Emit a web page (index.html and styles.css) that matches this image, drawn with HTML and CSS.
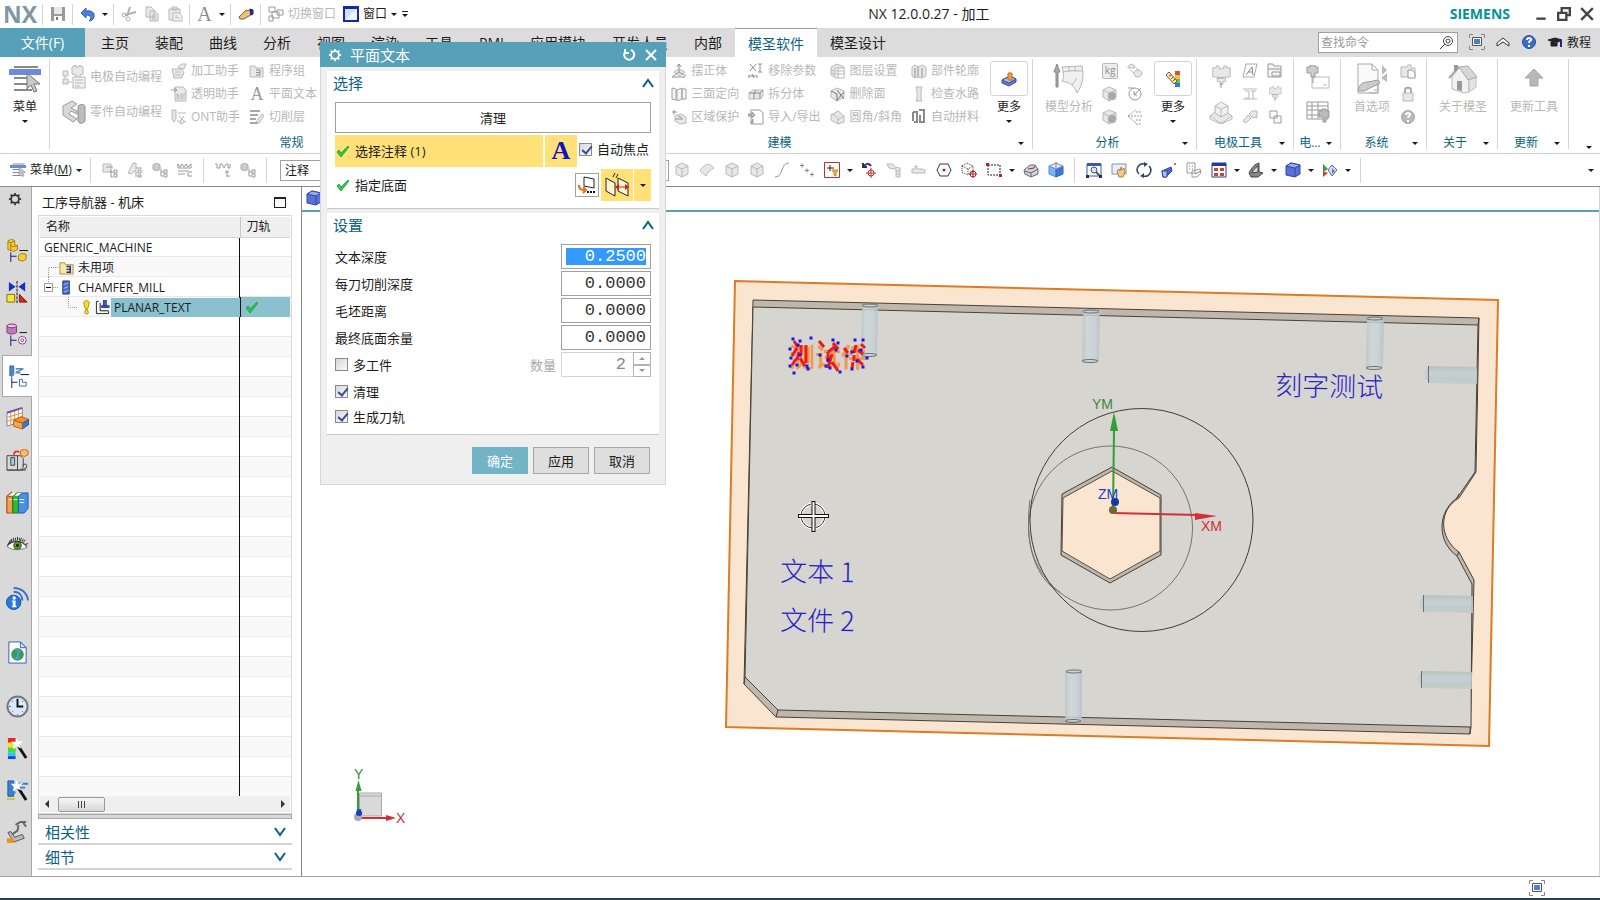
FILE: index.html
```html
<!DOCTYPE html>
<html lang="zh-CN">
<head>
  <meta charset="UTF-8" />
  <meta name="viewport" content="width=device-width, initial-scale=1.0" />
  <title>NX 12.0.0.27 - 加工</title>
  <link rel="stylesheet" href="styles.css">
</head>
<body>
  <!-- icon sprite -->
  <svg class="sprite" aria-hidden="true">
    <symbol id="save" viewBox="0 0 16 16"><path fill="#9a9a9a" stroke="none" d="M1 1h14v14H1z"/><path fill="#e8e8e8" stroke="none" d="M4 1h8v7H4z"/><path fill="#fff" stroke="none" d="M4 10h8v5H4z"/><path fill="#777" stroke="none" d="M6 11h2v3H6z"/></symbol>
    <symbol id="undo" viewBox="0 0 16 16"><path fill="#4b82d8" stroke="#2e5fb4" d="M1 7l5-5v3c6-1 9 2 8 6-1 3-3 4-5 4 3-3 2-6-3-6v3z"/></symbol>
    <symbol id="cut" viewBox="0 0 16 16"><g fill="none" stroke="#b0b0b0"><path stroke-width="2" d="M9 1L6 10M15 6L4 9"/><circle cx="3" cy="9" r="2"/><circle cx="7" cy="13" r="2"/></g></symbol>
    <symbol id="copy" viewBox="0 0 16 16"><path d="M2 1h5l3 3v7H2zM6 5h5l3 3v7H6z"/><path d="M8 9h4M8 11h4M8 13h4"/></symbol>
    <symbol id="paste" viewBox="0 0 16 16"><path d="M2 3h11v11H2zM5 1h5v3H5z"/><path fill="#f6f6f6" d="M6 7h6l3 3v5H6z"/><path d="M8 10h3M8 12h5"/></symbol>
    <symbol id="hand" viewBox="0 0 16 16"><path fill="#e8c27a" stroke="#7a6238" d="M1 11l6-6 5-1 1 5-4 2-3 2H2z"/><path fill="#2a2aa0" stroke="#1a1a80" d="M12 3l3 1v4l-2 1z"/></symbol>
    <symbol id="windows" viewBox="0 0 16 16"><path fill="#fff" stroke="#999" d="M1 1h6v5H1zM9 4h6v5H9zM4 6h7v6H4zM1 10h4v5H1z"/></symbol>
    <symbol id="window" viewBox="0 0 16 16"><path fill="#cfe0f8" stroke="#1428a8" stroke-width="2" d="M1 1h14v14H1z"/><path stroke="none" fill="#fff" d="M2 14L14 2v12z" opacity=".6"/><path fill="#1428a8" stroke="none" d="M0 0h16v3H0z"/></symbol>
    <symbol id="menu" viewBox="0 0 32 28"><path fill="none" stroke="#8a8a8a" stroke-width="2" d="M5 2h24M5 13h18M5 19h14M5 25h18"/><path fill="#6d8bdc" stroke="none" d="M0 4h32v6H0z"/><path fill="#c8c8c8" stroke="#777" d="M18 8v16l4-4 3 7 3-1-3-7h6z"/></symbol>
    <symbol id="machine" viewBox="0 0 24 24"><path d="M10 2h2V0h2v2h3V0h2v2h2v7l-3 1v3h-4v-3l-4-1z"/><path d="M1 6h5v5H1zM1 14h5v5H1zM6 17h4M3 11v3"/><path fill="#f2f2f2" d="M11 12h12v11H11z"/><path d="M13 15h8M13 18h8M13 21h5"/></symbol>
    <symbol id="part" viewBox="0 0 24 24"><path fill="#d8d8d8" stroke="#9a9a9a" d="M1 6l9-5 5 3-6 4 6 3v3l-6-3-2 3 8 5-4 3-10-7z"/><path fill="#bdbdbd" stroke="#8e8e8e" d="M16 6c2-2 6-2 7 0v15c-2 3-6 3-7 0z"/><path d="M17 10l5-2M17 14l5-2M17 18l5-2"/></symbol>
    <symbol id="helper" viewBox="0 0 16 16"><path d="M1 6h9l3 3-2 6H3z"/><path d="M7 5c2-5 5-4 8-4l-2 5z"/><path d="M4 9h5M4 12h6"/></symbol>
    <symbol id="def" viewBox="0 0 16 16"><path d="M4 1h8l3 3v11H4z"/><path d="M6 8v5h1l1-2-1-3zM12 8h-2v5h2M10 10h2M13 13V8h2"/><path stroke="#999" d="M0 4h5M3 2l3 2-3 2"/></symbol>
    <symbol id="ont" viewBox="0 0 16 16"><path d="M1 1h4v9l-2 3-2-3zM7 4h8M8 7l6 6M13 7l-5 7M6 11l4 4 5-3"/></symbol>
    <symbol id="folder" viewBox="0 0 16 16"><path d="M1 3h5l1 2h7v9H1z"/><path fill="none" stroke="#909090" d="M7 7h4v5H7M7 9.500h4"/></symbol>
    <symbol id="cutlevel" viewBox="0 0 16 16"><path fill="none" stroke="#a8a8a8" stroke-width="2" d="M1 2h10M1 6h8M1 10h6M1 14h8"/><path d="M7 13l6-8 2 2-5 7z"/></symbol>
    <symbol id="axisbody" viewBox="0 0 16 16"><path d="M3 9l5-3 6 3-5 4z"/><path fill="none" stroke="#909090" d="M8 9V1M6 4l2-3 2 3M8 9l-7 5M8 9l7 4M1 14h13"/></symbol>
    <symbol id="planes" viewBox="0 0 16 16"><path fill="#f6f6f6" stroke="#a0a0a0" d="M1 2l4 1v11l-4-1zM6 4l5-2v11l-5 2zM11 3h4v10h-4z"/></symbol>
    <symbol id="protect" viewBox="0 0 16 16"><path d="M4 7l6-2 5 3v6l-6 1-5-3z"/><path fill="none" stroke="#999" d="M1 3h5M3 1v5M4 10h8M7 7l4 2"/></symbol>
    <symbol id="param" viewBox="0 0 16 16"><path fill="none" stroke="#8d8d8d" d="M2 1l6 7M8 1L2 8M10 1h4M12 1v8M10 9h4M1 12v3M1 13h7M9 12v3M4 11l2 4"/></symbol>
    <symbol id="split" viewBox="0 0 16 16"><path d="M1 7l4-3h10v6l-3 3H1z"/><path fill="none" stroke="#888" d="M1 7h11v6M12 7l3-3M6 7v6M8 4L6 7"/></symbol>
    <symbol id="import" viewBox="0 0 16 16"><path fill="#fff" stroke="#999" d="M3 1h9l3 3v11H3z"/><path fill="#bbb" stroke="#999" d="M0 5h4V3l3 3-3 3V7H0zM5 10v4H3z"/></symbol>
    <symbol id="layers" viewBox="0 0 16 16"><path d="M1 4l6-3 7 3v8l-7 3-6-3z"/><path fill="#fff" d="M5 5h9v10H5z"/><path d="M6 8h7M6 11h7M8 5v10M1 7l4 1M1 10l4 1"/></symbol>
    <symbol id="delface" viewBox="0 0 16 16"><path d="M1 5l6-3 7 3v6l-7 4-6-4z"/><path fill="none" stroke="#777" d="M1 5l6 3v7M7 4l7 9M14 6l-7 8"/></symbol>
    <symbol id="fillet" viewBox="0 0 16 16"><path d="M1 6c3-1 6 1 7 5v4l-7-4zM1 6l7-4 6 5v6l-6 2M8 11l6-4"/></symbol>
    <symbol id="profile" viewBox="0 0 16 16"><path d="M1 4l3-2 3 2 4-2 4 2v9l-4 2-4-1-3 1-3-2z"/><path stroke="#909090" d="M4 5v9M7 4v10M11 5v9"/></symbol>
    <symbol id="water" viewBox="0 0 16 16"><path d="M5 1h6l-1 3v8l1 3H5l1-3V4z"/></symbol>
    <symbol id="splice" viewBox="0 0 16 16"><path fill="none" stroke="#8a8a8a" stroke-width="2" d="M2 3h4v10H3M2 3v9M8 1h5v12H9V6"/></symbol>
    <symbol id="moreblue" viewBox="0 0 16 16"><path fill="#5b7ed0" stroke="#34509a" d="M1 9l8-4 6 3v3l-7 4-7-3z"/><path fill="#a8c0f0" stroke="#34509a" d="M1 9l8-4 6 3-7 4z"/><path fill="#f09a40" stroke="#c87020" d="M7 2h4v7H7z"/></symbol>
    <symbol id="morecolor" viewBox="0 0 16 16"><path fill="#e84a30" stroke="none" d="M10 0h5v4h-5z"/><path fill="#f2c838" stroke="none" d="M10 4h5v4h-5z"/><path fill="#58c848" stroke="none" d="M10 8h5v4h-5z"/><path fill="#3a74e0" stroke="none" d="M10 12h5v4h-5z"/><path fill="#f4e4b0" stroke="#8a5030" d="M1 4l3-3 8 9-3 3z"/><path stroke="#8a5030" d="M4 5l2-1M6 8l2-2M8 10l2-2"/></symbol>
    <symbol id="analysis" viewBox="0 0 32 32"><path fill="#f0f0f0" stroke="#b4b4b4" d="M9 4l20-1c2 10 1 18-5 27-2-7-8-11-15-12 2-4 2-8 0-14z"/><path fill="none" d="M10 9c8-2 14-1 19-1M16 4v5M22 3v6M24 15l-5 7"/><path fill="#a8a8a8" stroke="#888" d="M4 1L1 9h2v15h2V9h2z"/></symbol>
    <symbol id="domes" viewBox="0 0 16 16"><path d="M1 5c0-5 7-5 7 0zM7 11c0-5 8-5 8 0l-3 3H9zM9 5l3 2M3 7l4 3"/></symbol>
    <symbol id="cubedot" viewBox="0 0 16 16"><path d="M1 4l6-3 7 3v7l-7 4-6-4z"/><path d="M1 4l6 3 7-3M7 7v8"/><circle cx="10" cy="10" r="4" fill="#a8a8a8"/></symbol>
    <symbol id="dial" viewBox="0 0 16 16"><circle cx="8" cy="8" r="6" fill="#fff" stroke="#999"/><path stroke="#999" d="M7 9l7-7M1 2h5M7 5v4h3"/></symbol>
    <symbol id="tree3" viewBox="0 0 16 16"><path fill="none" stroke="#999" stroke-dasharray="2 1" d="M1 7l8-6M1 7h14M1 7l8 7M9 3h6M9 11h6M9 15h6"/></symbol>
    <symbol id="spindle" viewBox="0 0 24 26"><path d="M3 3h4V1h3v3h5V1h3v2h4v10h-5v5h-3v3h-3v-3H8v-5H3z"/><path stroke="#888" d="M8 14h8M12 19v6"/></symbol>
    <symbol id="block" viewBox="0 0 24 24"><path d="M1 16l5-4h12l5 4-10 7H11z"/><path fill="#f0f0f0" d="M6 6l6-4 7 4v7l-7 4-6-4z"/><path fill="none" d="M6 6l6 3 7-3M12 9v8M1 16v3l11 5 11-5v-3"/></symbol>
    <symbol id="sheetA" viewBox="0 0 16 16"><path fill="#fff" stroke="#aaa" d="M4 1h11l-3 13H1z"/><path fill="none" stroke="#888" d="M4 12l6-8 1 8M6 9h4"/></symbol>
    <symbol id="rail2" viewBox="0 0 16 16"><path fill="none" d="M1 3h14M1 13h14M3 5h4v7H3M9 5h5M11 5v8"/></symbol>
    <symbol id="pen" viewBox="0 0 16 16"><path d="M1 12l5-6 3 3-5 5zM7 5l3-3 5 0v7l-5-1z"/></symbol>
    <symbol id="card" viewBox="0 0 16 16"><path fill="#f4f4f4" stroke="#999" d="M1 1h5l1 2h7v11H1z"/><path fill="none" stroke="#999" d="M1 6h13M5 9h8v4H5z"/></symbol>
    <symbol id="squares" viewBox="0 0 16 16"><path fill="#fff" stroke="#999" d="M3 2h7v7H3zM7 7h7v7H7z"/></symbol>
    <symbol id="spindle2" viewBox="0 0 24 24"><path fill="#fff" d="M6 12h17v11H6z"/><path fill="#ccc" stroke="#999" d="M1 2h3V0h5v2h3v6H9v4H5V8H1zM7 12v6"/><path fill="none" d="M17 20h4"/></symbol>
    <symbol id="grid" viewBox="0 0 24 24"><path fill="#fff" stroke="#999" d="M1 2h21v17H1z"/><path stroke="#999" d="M1 6h21M1 10h21M1 15h21M6 2v17M12 2v17"/><path fill="#bbb" stroke="#999" d="M13 11h3V9h4v2h3v6h-3v5h-3v-5h-4z"/></symbol>
    <symbol id="prefs" viewBox="0 0 32 32"><path fill="#fafafa" stroke="#aaa" d="M2 1h14l6 6v23H2z"/><path fill="none" stroke="#aaa" d="M16 1v6h6M13 22h9v8h-9M18 27h3"/><path fill="#ccc" stroke="#999" d="M2 28c1-7 5-9 10-9l10-2 2 3-8 4-8 4z"/><path fill="#bbb" stroke="none" d="M26 2l5 5-5 5zM31 10v9l-6-4z"/></symbol>
    <symbol id="sync" viewBox="0 0 16 16"><path d="M1 4h6l1-2h3v3h4v9H1z"/><path fill="#fff" stroke="#999" d="M8 7h4l3 3v5H8z"/></symbol>
    <symbol id="lock" viewBox="0 0 16 16"><path fill="none" stroke="#aaa" stroke-width="2" d="M5 7V4c0-3 6-3 6 0v3"/><path d="M3 7h10v8H3z"/></symbol>
    <symbol id="helpgrey" viewBox="0 0 16 16"><circle cx="8" cy="8" r="6.500" fill="#b8b8b8" stroke="#a4a4a4"/><path fill="none" stroke="#fff" stroke-width="2" d="M6 6c0-3 5-2 4 0-1 1-2 1-2 3M8 11v2"/></symbol>
    <symbol id="house" viewBox="0 0 32 32"><path fill="#f2f2f2" stroke="#bbb" d="M5 14l7-10 10 12 0 13-5 1-12-4z"/><path fill="#e4e4e4" stroke="#bbb" d="M22 16l7-2v10l-7 5z"/><path fill="#d6d6d6" stroke="#aaa" d="M12 4l9-1 9 11-9 3z"/><path fill="none" stroke="#aaa" stroke-width="2" d="M2 15L12 4"/><path fill="#999" stroke="none" d="M10 18h5v10l-5-1zM7 2h4v4L7 9z"/></symbol>
    <symbol id="uparrow" viewBox="0 0 32 32"><path fill="#b8b8b8" stroke="#a8a8a8" d="M16 6l9 9h-5v8h-8v-8H7z"/></symbol>
    <symbol id="nodes" viewBox="0 0 16 16"><path d="M1 2h8v8H1z"/><path fill="none" stroke="#999" d="M4 5h7M9 8v7h2M12 8h3v3h-3zM12 12h3v3h-3zM9 10h3"/></symbol>
    <symbol id="nodes2" viewBox="0 0 16 16"><path d="M6 1h3v7l-5 4-3-1z"/><path fill="none" stroke="#999" d="M9 6h6M9 9v6M11 8h3v3h-3zM11 13h3v2h-3z"/></symbol>
    <symbol id="nodes3" viewBox="0 0 16 16"><path fill="#ccc" stroke="#aaa" d="M1 3c1-2 6-2 7 0v4c-1 2-6 2-7 0z"/><path fill="none" stroke="#999" d="M9 7v7h2M12 8h3v3h-3zM12 12h3v3h-3zM9 10h3"/></symbol>
    <symbol id="comb" viewBox="0 0 16 16"><path fill="none" stroke="#999" d="M1 2l2 3 2-3 2 3 2-3 2 3 3-3v4H1zM1 9h9M1 12h7M11 8v6h4M12 10h3"/></symbol>
    <symbol id="wave" viewBox="0 0 16 16"><path fill="none" stroke="#999" d="M0 2h2v4h3V2h2l2 4 2-4h2v4h2V2M12 8v7M10 10h4M12 14h3"/></symbol>
    <symbol id="cube" viewBox="0 0 16 16"><path d="M2 4l6-3 6 3v8l-6 3-6-3z"/><path d="M2 4l6 3 6-3M8 7v8"/></symbol>
    <symbol id="surface" viewBox="0 0 16 16"><path d="M1 9c2-5 6-6 9-7l5 4c-4 2-6 4-8 8z"/></symbol>
    <symbol id="curve" viewBox="0 0 16 16"><path fill="none" stroke="#999" d="M1 15c9 0 5-14 14-14"/></symbol>
    <symbol id="points" viewBox="0 0 16 16"><path fill="none" stroke="#888" d="M1 3.500h4M3 1.500v4M6 8.500h4M8 6.500v4M11 12.500h4M13 10.500v4"/></symbol>
    <symbol id="filter" viewBox="0 0 16 16"><path fill="#fff" stroke="#b83030" d="M.5 .5h15v15H.5z"/><path fill="none" stroke="#222" d="M3 6h7M6 3v6"/><path fill="#e8b040" stroke="#c89020" d="M8 8h6l-2 3v3l-2-1v-2z"/></symbol>
    <symbol id="rotpt" viewBox="0 0 16 16"><path fill="none" stroke="#303060" stroke-width="2" d="M2 1v4h4M2 5c3-4 6-4 8-1"/><circle cx="10" cy="11" r="3" fill="none" stroke="#c03030"/><path stroke="#c03030" d="M5 11h10M10 6v10"/></symbol>
    <symbol id="stacks" viewBox="0 0 16 16"><path d="M1 2h6l2 3 5 1v9h-4V7L3 6z"/><path d="M10 9h4M10 12h4"/></symbol>
    <symbol id="flat" viewBox="0 0 16 16"><path d="M1 7h3V4h2v3h5l3 1v3H1z"/></symbol>
    <symbol id="hex" viewBox="0 0 16 16"><path fill="#fff" stroke="#333" d="M4 2h8l3 6-3 6H4L1 8z"/><circle cx="8" cy="8" r="1.500" fill="#c02020" stroke="none"/></symbol>
    <symbol id="cubept" viewBox="0 0 16 16"><path fill="none" stroke="#333" stroke-dasharray="1 1" d="M1 4l5-3 6 3v6l-5 3-6-3zM1 4l6 3 5-3M7 7v6"/><circle cx="12" cy="12" r="3" fill="none" stroke="#c02020"/><path stroke="#c02020" d="M8 12h8M12 8v8"/></symbol>
    <symbol id="marquee" viewBox="0 0 16 16"><path fill="none" stroke="#222" stroke-dasharray="2 1" d="M2 3h12v10H2z"/><path fill="#c02020" stroke="none" d="M0 1h3v3H0zM13 12h3v3h-3z"/></symbol>
    <symbol id="shaded" viewBox="0 0 16 16"><path fill="#ccd4e0" stroke="#666" d="M1 8l6-5h5l3 4v5l-7 3-6-3z"/><path fill="none" stroke="#c02020" d="M5 7l6-1 1-2"/><path fill="none" stroke="#666" d="M2 9l6 2 7-4M8 11v4"/></symbol>
    <symbol id="bluecube" viewBox="0 0 16 16"><path fill="#7cb4f4" stroke="#5c90d8" d="M1 4l7 3v8l-7-3z"/><path fill="#3f78d8" stroke="#3462b8" d="M15 4L8 7v8l7-3z"/><path fill="#d8eafe" stroke="#7090c8" d="M1 4l7-3 7 3-7 3z"/><path fill="none" stroke="#e06060" d="M8 0v6"/></symbol>
    <symbol id="fit" viewBox="0 0 16 16"><path fill="#fff" stroke="#3a58b8" d="M1 2h14v12H1z"/><path fill="#3a58b8" stroke="none" d="M1 1h14v3H1z"/><circle cx="8" cy="8" r="3" fill="#cfe2fa" stroke="#555"/><path fill="none" stroke="#555" stroke-width="2" d="M10 10l4 4"/><path fill="#333" stroke="none" d="M0 13h3v3H0zM13 13h3v3h-3z"/></symbol>
    <symbol id="pan" viewBox="0 0 16 16"><path fill="#e8eefa" stroke="#8090b8" d="M1 2h14v10H1z"/><path fill="#f0c888" stroke="#b08040" d="M6 9l2-2 1 2 1-4 1 3 2-2 1 4-2 5H8z"/></symbol>
    <symbol id="rotate" viewBox="0 0 16 16"><path fill="none" stroke="#34406c" stroke-width="1.500" d="M3 12a6 6 0 0 1 6-10M13 4a6 6 0 0 1-6 10"/><path fill="#34406c" stroke="none" d="M8 0l4 2-4 3zM8 11v5l-4-2z"/></symbol>
    <symbol id="persp" viewBox="0 0 16 16"><path fill="#4a66d0" stroke="#30489c" d="M1 9l9-4 1 4-6 6H2z"/><path fill="#b0c4f8" stroke="#30489c" d="M1 9h5v6H2z"/><circle cx="14" cy="2" r="1" fill="#e02020" stroke="none"/></symbol>
    <symbol id="sketch" viewBox="0 0 16 16"><path fill="#fff" stroke="#999" d="M1 1h8v10H1zM6 9l8-2 1 4-4 4H6z"/><path fill="none" stroke="#777" d="M3 4h1M6 4h1M3 7h1M6 7h1M9 12l6-3"/></symbol>
    <symbol id="layout" viewBox="0 0 16 16"><path fill="#fff" stroke="#24389c" d="M1 1h14v14H1z"/><path fill="#24389c" stroke="none" d="M1 1h14v3H1z"/><path fill="#d04040" stroke="none" d="M3 6h4v3H3zM9 6h4v3H9zM3 11h4v3H3zM9 11h4v3H9z"/></symbol>
    <symbol id="clip" viewBox="0 0 16 16"><path fill="#888" stroke="#444" d="M1 11C4 5 7 2 11 1v9l4 1-5 4H3z"/><path fill="#ddd" stroke="#444" d="M4 11c1-3 3-5 6-7v6z"/></symbol>
    <symbol id="solid" viewBox="0 0 16 16"><path fill="#5870d8" stroke="#3048a8" d="M1 4l5-3 9 2v9l-5 3-9-2z"/><path fill="#98acf0" stroke="#3048a8" d="M1 4l5-3 9 2-5 3z"/><path fill="none" stroke="#3048a8" d="M10 6v9"/></symbol>
    <symbol id="play" viewBox="0 0 16 16"><path fill="#30a040" stroke="none" d="M1 2l5 5-5 3z"/><path fill="#d04040" stroke="none" d="M1 9l5 2-5 4z"/><path fill="#d8e0f0" stroke="#5a6a90" d="M10 3l5 5-5 6-4-6z"/><path fill="#5a78c8" stroke="none" d="M10 6l3 3-3 3z"/></symbol>
    <symbol id="expand" viewBox="0 0 16 16"><path fill="none" stroke="#888" stroke-width="1" d="M.5 4V.5H4M12 .5h3.500V4M15.500 12v3.500H12M4 15.500H.5V12"/><path fill="#fff" stroke="#555" stroke-width="1" d="M3.500 3.500h9v8h-9z"/><path fill="#4a80d0" stroke="none" d="M5 5h6v5H5z"/></symbol>
    <symbol id="check" viewBox="0 0 14 14"><path fill="#2cc848" stroke="#189030" stroke-width=".7" d="M1 8l2-2 2 3 7-7 1 1-8 10z"/></symbol>
    <symbol id="gear" viewBox="0 0 16 16"><circle cx="8" cy="8" r="4.500" fill="none" stroke="currentColor" stroke-width="2"/><path stroke="currentColor" stroke-width="2" d="M8 1v2M8 13v2M1 8h2M13 8h2M3 3l1.500 1.500M11.500 11.500L13 13M13 3l-1.500 1.500M4.500 11.500L3 13"/></symbol>

    <!-- resource bar -->
    <symbol id="r-assembly" viewBox="0 0 24 24"><path fill="#f6cc38" stroke="#a87c10" d="M2 2l4-2 3 2v4l3 1v4l-4 2-6-2z"/><path fill="none" stroke="#a87c10" d="M2 3l3 1 4-2M5 4v8M5 7l3 1 4-1"/><path stroke="#111" d="M14 12h9"/><path stroke="#111880" fill="none" d="M5 14v10M5 18h6"/><path fill="#f6cc38" stroke="#a87c10" d="M13 17l3-2 5 1v5l-3 2-5-1z"/></symbol>
    <symbol id="r-constraint" viewBox="0 0 24 24"><path fill="#1830c8" stroke="none" d="M3 1l7 5-7 5zM20 1l-7 5 7 5z"/><path stroke="#111" stroke-dasharray="3 1" d="M11.500 0v24"/><path fill="#f8e830" stroke="#807010" d="M1 14h8v8H1z"/><path fill="#d03020" stroke="#801010" d="M14 14l8 8h-8z"/></symbol>
    <symbol id="r-part" viewBox="0 0 24 24"><path fill="#c078b8" stroke="#803878" d="M1 3c2-2 8-2 10 0v7c-2 2-8 2-10 0z"/><ellipse cx="6" cy="3" rx="5" ry="2" fill="#e8c0e4" stroke="#803878"/><path stroke="#111" d="M14 10h8"/><path fill="none" stroke="#111880" d="M5 13v11M5 18h6"/><circle cx="17" cy="18" r="4" fill="#fff" stroke="#903888"/><circle cx="17" cy="18" r="1.500" fill="none" stroke="#903888"/></symbol>
    <symbol id="r-operation" viewBox="0 0 24 24"><path fill="#4a8ad0" stroke="#2c60a0" d="M3 1h4v8l-2 3-2-3z"/><path fill="none" stroke="#4a8ad0" stroke-width="1.500" d="M2 10c3 3 5 0 5-1M9 4h8L9 8h5"/><path stroke="#111" d="M14 10h9"/><path fill="none" stroke="#111880" d="M5 13v11M5 18h6"/><path fill="#fff" stroke="#3068b0" d="M13 15h3v3h4v4h-7z"/></symbol>
    <symbol id="r-table" viewBox="0 0 24 24"><path fill="#fff" stroke="#8878a8" d="M1 6l16-5v14L1 20z"/><path fill="none" stroke="#e09040" d="M1 11l16-5M1 15l16-5M5 5v14M9 3v15M13 2v14"/><path fill="none" stroke="#7850a8" stroke-width="2" d="M1 6l16-5"/><path fill="#f09030" stroke="#b86010" d="M8 14l8-4 8 3-7 4z"/><path fill="#3a78d0" stroke="#2050a0" d="M17 17l7-4v5l-7 5z"/><path fill="#f8a848" stroke="#b86010" d="M8 14l9 3v6l-9-3z"/></symbol>
    <symbol id="r-machine" viewBox="0 0 24 24"><path fill="#d8d8d8" stroke="#444" d="M1 7h14l3 3v9l-3 3H1z"/><path fill="#a8c8e8" stroke="#444" d="M5 9h4v8H5z"/><path fill="none" stroke="#444" d="M12 7v15M17 17c5-3 5 0 4 3l-5 2M1 22h20"/><path fill="#f8c060" stroke="#d06020" d="M15 2l4-2 4 2v4l-4 2-4-2z"/><path fill="none" stroke="#e04020" stroke-width="2" d="M8 6c1-4 3-4 6-3"/></symbol>
    <symbol id="r-books" viewBox="0 0 24 24"><path fill="#e88830" stroke="#a85810" d="M1 5l5-4v18l-5 4z"/><path fill="#f0a050" stroke="#a85810" d="M1 6h6v17H1z"/><path fill="#30b838" stroke="#187820" d="M7 6l4-4h5l-3 4v17H7z"/><path fill="#4890e0" stroke="#2058a8" d="M13 6l4-4h6v16l-4 5h-6z"/><path stroke="#fff" d="M3 9h3M8 9h4M14 9h5M14 12h5"/><path fill="#fff" stroke="none" d="M3 5l3-3h4L7 5zM9 5l3-3h4l-3 3z"/></symbol>
    <symbol id="r-eye" viewBox="0 0 24 24"><path fill="#fff" stroke="#777" d="M1 14c6-7 15-7 21 1-7 3-15 4-21-1z"/><circle cx="12" cy="13" r="4" fill="#5a9a30" stroke="#335c18"/><circle cx="12" cy="13" r="1.500" fill="#111" stroke="none"/><path fill="none" stroke="#333" d="M2 13l1-3M5 11l0-4M8 9V5M12 8V4M15 9l1-4M18 10l2-3M20 12l3-1M1 13c6-6 15-6 21 1M3 12l1-4M6 10V6M10 8V5M14 8V5M17 9l1-3"/></symbol>
    <symbol id="r-info" viewBox="0 0 24 24"><path fill="none" stroke="#3a70c8" stroke-width="2" d="M8 5c6 0 9 4 9 9M8 1c8 0 14 5 15 13"/><circle cx="8" cy="16" r="7.500" fill="#2878d8" stroke="#1850a0"/><path fill="#fff" stroke="none" d="M7 10h3v3H7zM6 14h4v6h1v1H6v-1h1v-5H6z"/></symbol>
    <symbol id="r-web" viewBox="0 0 24 24"><path fill="#fff" stroke="#3060b0" d="M3 1h12l6 6v16H3z"/><path fill="#d8e8fc" stroke="#3060b0" d="M15 1v6h6z"/><circle cx="12" cy="14" r="6" fill="#48a0d8" stroke="#307848"/><path fill="#38a048" stroke="none" d="M7 11l4-2 1 4-2 5-3-2zM14 10l4 3-2 5-3 1z"/></symbol>
    <symbol id="r-clock" viewBox="0 0 24 24"><circle cx="12" cy="12" r="10.500" fill="#d8e8f8" stroke="#777" stroke-width="2"/><path fill="none" stroke="#111" stroke-width="2" d="M12 4v8h6"/><path stroke="#556" d="M12 20v1M3 12h2M6 6l1 1M18 6l-1 1M6 18l1-1M18 18l-1-1"/></symbol>
    <symbol id="wand" viewBox="0 0 24 24"><path stroke="#111" stroke-width="3" d="M12 8l9 14"/><path fill="#fff" stroke="none" d="M11 1l2 4 5-1-4 4 2 4-5-2-4 3 1-5-3-3h5z"/></symbol>
    <symbol id="r-color" viewBox="0 0 24 24"><path fill="#f02818" stroke="none" d="M2 1h8v5H2z"/><path fill="#f8e020" stroke="none" d="M2 6h8v5H2z"/><path fill="#40e030" stroke="none" d="M2 11h8v5H2z"/><path fill="#30c8e8" stroke="none" d="M2 16h8v4H2z"/><path fill="#1848e0" stroke="none" d="M2 20h8v3H2z"/><use href="#wand"/></symbol>
    <symbol id="r-tool" viewBox="0 0 24 24"><path fill="#3a80d0" stroke="#2058a0" d="M2 2h6v16H2z"/><path fill="none" stroke="#3a80d0" stroke-width="2" d="M10 5h13M13 9h7M1 14h9"/><path stroke="#d8c030" stroke-width="2" d="M1 21h8"/><use href="#wand"/></symbol>
    <symbol id="r-robot" viewBox="0 0 24 24"><path fill="none" stroke="#666" stroke-width="2" d="M5 15l7-5 1-6M10 4l5-3h6M18 2l3 4"/><path fill="#bbb" stroke="#555" d="M2 12l3-1 4 6 8-3 2 4-11 4z"/><path fill="#f09020" stroke="none" d="M1 18h7v5H1z"/></symbol>
  </svg>

  <header class="titlebar">
    <span class="logo">NX</span>
    <i class="vsep"></i>
    <button class="tool" aria-label="保存"><svg class="ico"><use href="#save"/></svg></button>
    <i class="vsep"></i>
    <button class="tool" aria-label="撤销"><svg class="ico"><use href="#undo"/></svg></button>
    <button class="drop" aria-label="撤销列表"><i class="caret"></i></button>
    <i class="vsep"></i>
    <button class="tool" aria-label="剪切"><svg class="ico"><use href="#cut"/></svg></button>
    <button class="tool" aria-label="复制"><svg class="ico"><use href="#copy"/></svg></button>
    <button class="tool" aria-label="粘贴"><svg class="ico"><use href="#paste"/></svg></button>
    <i class="vsep"></i>
    <button class="tool letter" aria-label="文本">A</button>
    <button class="drop" aria-label="文本列表"><i class="caret"></i></button>
    <i class="vsep"></i>
    <button class="tool" aria-label="触控"><svg class="ico"><use href="#hand"/></svg></button>
    <i class="vsep"></i>
    <button class="qat off"><svg class="ico"><use href="#windows"/></svg>切换窗口</button>
    <button class="qat"><svg class="ico"><use href="#window"/></svg>窗口<i class="caret"></i></button>
    <button class="custom" aria-label="自定义"><i class="caret"></i></button>
    <h1>NX 12.0.0.27 - 加工</h1>
    <span class="siemens">SIEMENS</span>
    <div class="wincontrols">
      <button aria-label="最小化"><svg viewBox="0 0 12 12"><path d="M2 10h8"/></svg></button>
      <button aria-label="还原"><svg viewBox="0 0 12 12"><path d="M4 4V1h7v6H8M1 5h7v6H1z"/></svg></button>
      <button aria-label="关闭"><svg viewBox="0 0 12 12"><path d="M1 1l10 10M11 1L1 11"/></svg></button>
    </div>
  </header>

  <nav class="tabs">
    <a class="file" href="#">文件(F)</a>
    <a href="#">主页</a>
    <a href="#">装配</a>
    <a href="#">曲线</a>
    <a href="#">分析</a>
    <a href="#">视图</a>
    <a href="#">渲染</a>
    <a href="#">工具</a>
    <a href="#">PMI</a>
    <a href="#">应用模块</a>
    <a href="#">开发人员</a>
    <a href="#">内部</a>
    <a class="active" href="#">模圣软件</a>
    <a href="#">模圣设计</a>
    <div class="search">
      <input type="text" aria-label="查找命令" placeholder="查找命令" />
      <svg viewBox="0 0 16 16"><circle cx="10" cy="6" r="4.500"/><path d="M7 9l-5 5"/><circle cx="10" cy="6" r="2"/></svg>
    </div>
    <button class="tool" aria-label="全屏"><svg class="ico"><use href="#expand"/></svg></button>
    <button class="tool" aria-label="最小化功能区"><svg class="ico" viewBox="0 0 16 16"><path fill="#fff" stroke="#333" d="M2 9l6-5 6 5v3L8 8l-6 4z"/></svg></button>
    <button class="tool" aria-label="帮助"><svg class="ico" viewBox="0 0 16 16"><circle cx="8" cy="8" r="6.500" fill="#3a6cc8" stroke="#24509c"/><path fill="none" stroke="#fff" stroke-width="2" d="M6 6c0-3 5-2 4 0-1 1-2 1-2 3M8 11v2"/></svg></button>
    <button class="tutorial"><svg class="ico" viewBox="0 0 16 16"><path fill="#222" stroke="#222" d="M1 5l7-2 7 2-6 3zM4 7v4h6V7"/><path fill="none" stroke="#2020a0" stroke-width="2" d="M14 5v7"/></svg>教程</button>
  </nav>

  <section class="ribbon">
    <div class="group menu-group">
      <button class="big"><span class="face"><svg class="ico menu"><use href="#menu"/></svg></span>菜单<i class="caret"></i></button>
    </div>
    <div class="group wide">
      <div class="cols">
        <div class="col two">
          <button class="cmd"><svg class="ico m"><use href="#machine"/></svg>电极自动编程</button>
          <button class="cmd"><svg class="ico m"><use href="#part"/></svg>零件自动编程</button>
        </div>
        <div class="col">
          <button class="cmd"><svg class="ico"><use href="#helper"/></svg>加工助手</button>
          <button class="cmd"><svg class="ico"><use href="#def"/></svg>透明助手</button>
          <button class="cmd"><svg class="ico"><use href="#ont"/></svg>ONT助手</button>
        </div>
        <div class="col">
          <button class="cmd"><svg class="ico"><use href="#folder"/></svg>程序组</button>
          <button class="cmd"><span class="ico letter">A</span>平面文本</button>
          <button class="cmd"><svg class="ico"><use href="#cutlevel"/></svg>切削层</button>
        </div>
      </div>
      <div class="caption"><span>常规</span></div>
    </div>
    <div class="group wide right">
      <div class="cols">
        <div class="col">
          <button class="cmd"><svg class="ico"><use href="#axisbody"/></svg>摆正体</button>
          <button class="cmd"><svg class="ico"><use href="#planes"/></svg>三面定向</button>
          <button class="cmd"><svg class="ico"><use href="#protect"/></svg>区域保护</button>
        </div>
        <div class="col">
          <button class="cmd"><svg class="ico"><use href="#param"/></svg>移除参数</button>
          <button class="cmd"><svg class="ico"><use href="#split"/></svg>拆分体</button>
          <button class="cmd"><svg class="ico"><use href="#import"/></svg>导入/导出</button>
        </div>
        <div class="col">
          <button class="cmd"><svg class="ico"><use href="#layers"/></svg>图层设置</button>
          <button class="cmd"><svg class="ico"><use href="#delface"/></svg>删除面</button>
          <button class="cmd"><svg class="ico"><use href="#fillet"/></svg>圆角/斜角</button>
        </div>
        <div class="col">
          <button class="cmd"><svg class="ico"><use href="#profile"/></svg>部件轮廓</button>
          <button class="cmd"><svg class="ico"><use href="#water"/></svg>检查水路</button>
          <button class="cmd"><svg class="ico"><use href="#splice"/></svg>自动拼料</button>
        </div>
        <button class="big more"><span class="face"><svg class="ico"><use href="#moreblue"/></svg></span>更多<i class="caret"></i></button>
      </div>
      <div class="caption"><span>建模</span><i class="caret"></i></div>
    </div>
    <div class="group">
      <div class="cols">
        <button class="big off"><span class="face"><svg class="ico l"><use href="#analysis"/></svg></span>模型分析</button>
        <div class="col">
          <button class="cmd"><span class="ico kg">kg</span></button>
          <button class="cmd" aria-label="体积"><svg class="ico"><use href="#cubedot"/></svg></button>
          <button class="cmd" aria-label="间隙"><svg class="ico"><use href="#cubedot"/></svg></button>
        </div>
        <div class="col">
          <button class="cmd" aria-label="曲面"><svg class="ico"><use href="#domes"/></svg></button>
          <button class="cmd" aria-label="半径"><svg class="ico"><use href="#dial"/></svg></button>
          <button class="cmd" aria-label="列表"><svg class="ico"><use href="#tree3"/></svg></button>
        </div>
        <button class="big more"><span class="face"><svg class="ico"><use href="#morecolor"/></svg></span>更多<i class="caret"></i></button>
      </div>
      <div class="caption"><span>分析</span><i class="caret"></i></div>
    </div>
    <div class="group">
      <div class="cols">
        <div class="col two">
          <button class="cmd" aria-label="电极"><svg class="ico m"><use href="#spindle"/></svg></button>
          <button class="cmd" aria-label="毛坯"><svg class="ico m"><use href="#block"/></svg></button>
        </div>
        <div class="col">
          <button class="cmd" aria-label="图纸"><svg class="ico"><use href="#sheetA"/></svg></button>
          <button class="cmd" aria-label="基准"><svg class="ico"><use href="#rail2"/></svg></button>
          <button class="cmd" aria-label="编辑"><svg class="ico"><use href="#pen"/></svg></button>
        </div>
        <div class="col">
          <button class="cmd" aria-label="清单"><svg class="ico"><use href="#card"/></svg></button>
          <button class="cmd" aria-label="装夹"><svg class="ico"><use href="#spindle"/></svg></button>
          <button class="cmd" aria-label="复制电极"><svg class="ico"><use href="#squares"/></svg></button>
        </div>
      </div>
      <div class="caption"><span>电极工具</span><i class="caret"></i></div>
    </div>
    <div class="group">
      <div class="cols">
        <div class="col two">
          <button class="cmd" aria-label="电极出图"><svg class="ico m"><use href="#spindle2"/></svg></button>
          <button class="cmd" aria-label="电极表"><svg class="ico m"><use href="#grid"/></svg></button>
        </div>
      </div>
      <div class="caption"><span>电...</span><i class="caret"></i></div>
    </div>
    <div class="group">
      <div class="cols">
        <button class="big off"><span class="face"><svg class="ico l"><use href="#prefs"/></svg></span>首选项</button>
        <div class="col">
          <button class="cmd" aria-label="同步"><svg class="ico"><use href="#sync"/></svg></button>
          <button class="cmd" aria-label="授权"><svg class="ico"><use href="#lock"/></svg></button>
          <button class="cmd" aria-label="帮助"><svg class="ico"><use href="#helpgrey"/></svg></button>
        </div>
      </div>
      <div class="caption"><span>系统</span><i class="caret"></i></div>
    </div>
    <div class="group">
      <div class="cols"><button class="big off"><span class="face"><svg class="ico l"><use href="#house"/></svg></span>关于模圣</button></div>
      <div class="caption"><span>关于</span><i class="caret"></i></div>
    </div>
    <div class="group">
      <div class="cols"><button class="big off"><span class="face"><svg class="ico l"><use href="#uparrow"/></svg></span>更新工具</button></div>
      <div class="caption"><span>更新</span><i class="caret"></i></div>
    </div>
    <div class="group last">
      <div class="caption"><span></span><i class="caret"></i></div>
    </div>
  </section>

  <section class="toolbar">
    <button class="qat menu-m"><svg class="ico"><use href="#menu"/></svg><span>菜单(<u>M</u>)</span><i class="caret"></i></button>
    <i class="vsep"></i>
    <button class="tool" aria-label="创建程序"><svg class="ico"><use href="#nodes"/></svg></button>
    <button class="tool" aria-label="创建刀具"><svg class="ico"><use href="#nodes2"/></svg></button>
    <button class="tool" aria-label="创建几何体"><svg class="ico"><use href="#nodes3"/></svg></button>
    <button class="tool" aria-label="创建方法"><svg class="ico"><use href="#comb"/></svg></button>
    <i class="vsep"></i>
    <button class="tool" aria-label="切削"><svg class="ico"><use href="#wave"/></svg></button>
    <button class="tool" aria-label="工件"><svg class="ico"><use href="#nodes3"/></svg></button>
    <i class="vsep"></i>
    <select class="type-filter" aria-label="类型过滤器"><option>注释</option></select>
    <button class="tool" aria-label="实体"><svg class="ico"><use href="#cube"/></svg></button>
    <button class="tool" aria-label="面"><svg class="ico"><use href="#surface"/></svg></button>
    <button class="tool" aria-label="体"><svg class="ico"><use href="#cube"/></svg></button>
    <button class="tool" aria-label="边"><svg class="ico"><use href="#cube"/></svg></button>
    <button class="tool" aria-label="曲线"><svg class="ico"><use href="#curve"/></svg></button>
    <button class="tool" aria-label="点"><svg class="ico"><use href="#points"/></svg></button>
    <button class="tool" aria-label="过滤"><svg class="ico"><use href="#filter"/></svg></button>
    <button class="drop" aria-label="过滤列表"><i class="caret"></i></button>
    <button class="tool" aria-label="旋转点"><svg class="ico"><use href="#rotpt"/></svg></button>
    <button class="tool" aria-label="堆叠"><svg class="ico"><use href="#stacks"/></svg></button>
    <button class="tool" aria-label="平面"><svg class="ico"><use href="#flat"/></svg></button>
    <button class="tool" aria-label="六边形"><svg class="ico"><use href="#hex"/></svg></button>
    <button class="tool" aria-label="捕捉"><svg class="ico"><use href="#cubept"/></svg></button>
    <button class="tool" aria-label="矩形选择"><svg class="ico"><use href="#marquee"/></svg></button>
    <button class="drop" aria-label="选择列表"><i class="caret"></i></button>
    <button class="tool" aria-label="着色"><svg class="ico"><use href="#shaded"/></svg></button>
    <button class="tool" aria-label="工作截面"><svg class="ico"><use href="#bluecube"/></svg></button>
    <i class="vsep"></i>
    <button class="tool" aria-label="适合窗口"><svg class="ico"><use href="#fit"/></svg></button>
    <button class="tool" aria-label="平移"><svg class="ico"><use href="#pan"/></svg></button>
    <button class="tool" aria-label="旋转"><svg class="ico"><use href="#rotate"/></svg></button>
    <button class="tool" aria-label="透视"><svg class="ico"><use href="#persp"/></svg></button>
    <button class="tool" aria-label="草图"><svg class="ico"><use href="#sketch"/></svg></button>
    <button class="tool" aria-label="布局"><svg class="ico"><use href="#layout"/></svg></button>
    <button class="drop" aria-label="布局列表"><i class="caret"></i></button>
    <button class="tool" aria-label="剪切截面"><svg class="ico"><use href="#clip"/></svg></button>
    <button class="drop" aria-label="截面列表"><i class="caret"></i></button>
    <button class="tool" aria-label="渲染样式"><svg class="ico"><use href="#solid"/></svg></button>
    <button class="drop" aria-label="样式列表"><i class="caret"></i></button>
    <button class="tool" aria-label="播放"><svg class="ico"><use href="#play"/></svg></button>
    <button class="drop" aria-label="播放列表"><i class="caret"></i></button>
    <i class="vsep"></i>
    <button class="drop overflow" aria-label="工具条选项"><i class="caret"></i></button>
  </section>

  <main>
    <nav class="rail">
      <button class="gear" aria-label="资源条选项"><svg><use href="#gear"/></svg></button>
      <button class="first" aria-label="装配导航器"><svg><use href="#r-assembly"/></svg></button>
      <button aria-label="约束导航器"><svg><use href="#r-constraint"/></svg></button>
      <button aria-label="部件导航器"><svg><use href="#r-part"/></svg></button>
      <button class="active" aria-label="工序导航器"><svg><use href="#r-operation"/></svg></button>
      <button aria-label="加工特征导航器"><svg><use href="#r-table"/></svg></button>
      <button aria-label="机床导航器"><svg><use href="#r-machine"/></svg></button>
      <button aria-label="重用库"><svg><use href="#r-books"/></svg></button>
      <button aria-label="视图管理器"><svg><use href="#r-eye"/></svg></button>
      <button class="spaced" aria-label="信息"><svg><use href="#r-info"/></svg></button>
      <button class="spaced" aria-label="浏览器"><svg><use href="#r-web"/></svg></button>
      <button class="spaced" aria-label="历史记录"><svg><use href="#r-clock"/></svg></button>
      <button aria-label="颜色"><svg><use href="#r-color"/></svg></button>
      <button aria-label="加工向导"><svg><use href="#r-tool"/></svg></button>
      <button aria-label="角色"><svg><use href="#r-robot"/></svg></button>
    </nav>

    <aside class="navigator">
      <div class="nav-title"><h2>工序导航器 - 机床</h2><button class="maximize" aria-label="最大化"></button></div>
      <div class="tree">
        <table>
          <thead><tr><th>名称</th><th>刀轨</th></tr></thead>
          <tbody>
            <tr><td>GENERIC_MACHINE</td><td></td></tr>
            <tr><td><div class="node lv1"><svg class="branch" viewBox="0 0 14 20"><path d="M4.500 20V10.500H14"/></svg><svg viewBox="0 0 16 16"><path fill="#f8e8a0" stroke="#a89040" d="M1 3h5l1 2h8v10H1z"/><path fill="none" stroke="#1828a0" stroke-width="1.500" d="M8 7h4v6H8M8 10h4"/></svg>未用项</div></td><td></td></tr>
            <tr><td><div class="node lv1"><svg class="branch" viewBox="0 0 14 20"><path d="M4.500 0v6M9 10.500h5"/><path class="minus" d="M.5 6.500h8v8h-8z"/><path class="bar" d="M2 10.500h5"/></svg><svg viewBox="0 0 16 16"><path fill="#4a6cc8" stroke="#223c80" d="M4 1h7v14H4z"/><path stroke="#b0c4f0" d="M5 5l5-2M5 9l5-2M5 13l5-2"/></svg>CHAMFER_MILL</div></td><td></td></tr>
            <tr class="current"><td><div class="node lv2"><svg class="branch" viewBox="0 0 14 20"><path d="M4.500 0v10.500H14"/></svg><svg viewBox="0 0 16 16"><path fill="#f8e020" stroke="#a89010" d="M5 3c0-3 6-3 6 0L9 10H7z"/><circle cx="8" cy="13" r="2" fill="#f8e020" stroke="#a89010"/></svg><svg viewBox="0 0 16 16"><path fill="none" stroke="#222" d="M4 1.500H1.500v13h13V12"/><path fill="none" stroke="#111" d="M5.500 3v8.500h9"/><path fill="#4a60c0" stroke="#283c90" d="M9 0h3v6H9zM7 6h8v2H7z"/></svg><span>PLANAR_TEXT</span></div></td><td><svg class="ok"><use href="#check"/></svg></td></tr>
          </tbody>
        </table>
        <div class="hscroll"><i class="left"></i><i class="thumb"></i><i class="right"></i></div>
      </div>
      <div class="splitter"></div>
      <button class="fold">相关性<svg viewBox="0 0 12 10"><path d="M1 1l5 7 5-7"/></svg></button>
      <button class="fold">细节<svg viewBox="0 0 12 10"><path d="M1 1l5 7 5-7"/></svg></button>
    </aside>

    <section class="viewport">
      <div class="view-tabs"><svg class="ico"><use href="#solid"/></svg></div>
      <svg class="scene" viewBox="302 212 1297 664" preserveAspectRatio="xMinYMin">
        <defs>
          <linearGradient id="pinV"><stop offset="0" stop-color="#b9c4c9"/><stop offset=".3" stop-color="#ced7da"/><stop offset=".7" stop-color="#c8d2d7"/><stop offset="1" stop-color="#b7c1c8"/></linearGradient>
          <linearGradient id="pinH" x2="0" y2="1"><stop offset="0" stop-color="#b4bebd"/><stop offset=".4" stop-color="#c4d1d5"/><stop offset=".7" stop-color="#bccacf"/><stop offset="1" stop-color="#c6cbc8"/></linearGradient>
        </defs>
        <path class="stock" d="M735 281L1498 300L1489 746L726 727z"/>
        <path class="wall" d="M753 300L1479 318L1476 472L1459 498C1438 510 1439 538 1459 552L1474 580L1470 734L776 717L744 684z"/>
        <path class="face" d="M753 307L1478 325L1475 472L1457 498C1437 512 1437 542 1457 556L1472 584L1471 727L778 710L745 677z"/>
        <path class="edge" d="M1479 318L1478 325M776 717L778 710M744 684L745 677M1471 727L1470 734M1457 498L1459 494M1457 556L1459 552"/>
        <!-- pin holes -->
        <g>
          <g opacity=".85">
            <path fill="url(#pinV)" d="M862 305h16l-1 50-8 4-8-4z"/>
            <path fill="url(#pinV)" d="M1083 311h17l-1 50-9 4-8-4z"/>
            <path fill="url(#pinV)" d="M1367 318h17l-1 50h-17z"/>
            <path fill="url(#pinV)" d="M1065 671l8-4 9 4v50h-17z"/>
            <path fill="url(#pinH)" d="M1477 367l-49-1-4 8 4 9 49 1z"/>
            <path fill="url(#pinH)" d="M1473 596l-49-1-5 8 5 9 49 1z"/>
            <path fill="url(#pinH)" d="M1472 672l-50-1-5 8 5 9 50 1z"/>
          </g>
          <g class="rim">
            <ellipse cx="870" cy="305.500" rx="8" ry="1.500"/><ellipse cx="869" cy="355" rx="8" ry="1.500"/>
            <ellipse cx="1091" cy="311.500" rx="8" ry="1.500"/><ellipse cx="1090" cy="361" rx="8" ry="1.500"/>
            <ellipse cx="1375" cy="318.500" rx="8" ry="1.500"/><ellipse cx="1374" cy="368" rx="8" ry="1.500"/>
            <ellipse cx="1074" cy="671.500" rx="8" ry="1.500"/><ellipse cx="1073" cy="721" rx="8" ry="1.500"/>
            <path d="M1428.500 366v17M1423.500 595v17M1421.500 671v17"/>
          </g>
        </g>
        <circle class="edge soft" cx="1110.500" cy="528" r="82"/>
        <path class="edge soft" d="M1030 500C1024 545 1036 580 1060 592"/>
        <circle class="edge" cx="1141.500" cy="520" r="111.500"/>
        <path class="wall" d="M1112 467L1161 495V555L1110 583L1061 555L1062 494z"/>
        <path class="pocket" d="M1112 471L1160 498V551L1110 579L1062 551L1063 498z"/>
        <!-- machine coordinate system -->
        <path class="ax y" d="M1113 510L1114 430"/><path fill="#2fa038" d="M1114 412l4 19h-8z"/>
        <path class="ax x" d="M1113 513L1198 515"/><path fill="#d03038" d="M1217 516l-22 4v-7z"/>
        <circle cx="1115" cy="502" r="4" fill="#1438a8"/><circle cx="1113" cy="510" r="4" fill="#6e6838"/>
        <text class="axis y" x="1092" y="409">YM</text>
        <text class="axis x" x="1201" y="531">XM</text>
        <text class="axis z" x="1098" y="499">ZM</text>
        <!-- engraved notes -->
        <text class="note" x="1275" y="395" transform="rotate(1 1275 395)">刻字测试</text>
        <text class="note" x="780" y="581" transform="rotate(1 780 581)">文本 1</text>
        <text class="note" x="780" y="630" transform="rotate(1 780 630)">文件 2</text>
        <text class="path" x="789" y="367">测试件</text>
        <g class="cuts">
          <path d="M794 341l4 6M797 348l-5 8M799 352l-2 8M797 358l-5 7M801 345v10M806 345v18M800 358l5 8M819 341l5 6M833 343l5 6M836 346l-8 6M828 352v10M832 354l-4 14M832 362l6 9M844 348l4 5M856 345l-2 8M854 355v6M861 344l4 4M858 350l5 4M857 359l6 6M853 362l-1 6"/>
        </g>
        <g class="cuts pts">
          <path d="M793 339v.1M800 341v.1M811 338v.1M790 349v.1M798 345v.1M791 358v.1M800 355v.1M790 366v.1M797 365v.1M794 373v.1M807 366v.1M808 369v.1M820 355v.1M833 340v.1M838 343v.1M836 350v.1M828 360v.1M826 366v.1M830 368v.1M840 372v.1M847 356v.1M855 340v.1M863 340v.1M852 352v.1M861 350v.1M857 361v.1M852 369v.1M863 367v.1M867 358v.1"/>
        </g>
        <!-- cursor -->
        <g fill="none"><circle cx="813" cy="516" r="12" stroke="#fff" stroke-width="3"/><circle cx="813" cy="516" r="12" stroke="#333" stroke-dasharray="16 3"/><path stroke="#111" stroke-width="4" d="M798 516h31M813.500 501v31"/><path stroke="#fff" stroke-width="2" d="M799 516h29M813.500 502v29"/></g>
        <!-- view triad -->
        <path fill="#dadada" stroke="#a8a8a8" d="M359.500 793h22v23h-22zM359 796h22"/>
        <path class="ax y" d="M358 816v-26"/><path fill="#2fa038" d="M358.500 780l3 11h-6z"/>
        <path class="ax x" d="M358 818h30"/><path fill="#d03038" d="M396 818l-10 3v-6z"/>
        <circle cx="358" cy="817" r="4" fill="#a8a8b0"/><circle cx="359" cy="813" r="3" fill="#1438c8"/>
        <text class="axis y" x="354" y="779">Y</text>
        <text class="axis x" x="396" y="823">X</text>
        <text class="axis z small" x="356" y="815">Z</text>
      </svg>
    </section>
  </main>

  <footer class="status"><svg class="ico"><use href="#expand"/></svg></footer>

  <form class="dialog">
    <div class="dlg-title">
      <svg viewBox="0 0 16 16"><use href="#gear"/></svg>
      <h2>平面文本</h2>
      <button type="button" aria-label="重置"><svg viewBox="0 0 14 14"><path d="M3 4a5 5 0 1 0 6-2M3 1v4h4"/></svg></button>
      <button type="button" aria-label="关闭"><svg viewBox="0 0 14 14"><path d="M2 2l10 10M12 2L2 12"/></svg></button>
    </div>
    <section>
      <h3>选择<svg viewBox="0 0 12 10"><path d="M1 9l5-7 5 7"/></svg></h3>
      <button type="button" class="clean">清理</button>
      <div class="pick">
        <button type="button" class="step hot"><svg class="ok"><use href="#check"/></svg>选择注释 (1)</button>
        <button type="button" class="sq hot letterA" aria-label="注释">A</button>
        <label><input type="checkbox" checked />自动焦点</label>
      </div>
      <div class="pick">
        <button type="button" class="step"><svg class="ok"><use href="#check"/></svg>指定底面</button>
        <button type="button" class="framed" aria-label="平面对话框"><svg viewBox="0 0 18 18"><path fill="#fff" stroke="#222" d="M6 1l10 2v9L6 10z"/><path fill="none" stroke="#e07020" stroke-width="2" d="M1 9c0 5 3 5 6 5M5 11l3 3-3 3"/><path stroke="#111" stroke-width="2" stroke-dasharray="2 1" d="M9 16h8"/></svg></button>
        <button type="button" class="sq hot" aria-label="平面类型"><svg viewBox="0 0 24 24"><path fill="#fff6d0" stroke="#222" d="M1 5l9 5v13l-9-5zM13 5l10 5v13l-10-5z"/><path stroke="#222" d="M8 4l2-4M11 5l2-4"/><path stroke="#d02020" d="M11 14h12"/><path fill="#d02020" d="M10 14l4-3v6zM24 14l-4-3v6z"/></svg></button>
        <button type="button" class="arrow hot" aria-label="平面列表"><i class="caret"></i></button>
      </div>
    </section>
    <section class="settings">
      <h3>设置<svg viewBox="0 0 12 10"><path d="M1 9l5-7 5 7"/></svg></h3>
      <div class="field"><label for="depth">文本深度</label><input class="selected" id="depth" type="text" value="0.2500" /></div>
      <div class="field"><label for="cutDepth">每刀切削深度</label><input id="cutDepth" type="text" value="0.0000" /></div>
      <div class="field"><label for="blank">毛坯距离</label><input id="blank" type="text" value="0.0000" /></div>
      <div class="field"><label for="stockLeft">最终底面余量</label><input id="stockLeft" type="text" value="0.0000" /></div>
      <div class="field">
        <label><input type="checkbox" />多工件</label>
        <label class="off" for="count">数量</label>
        <div class="spin"><input id="count" type="text" value="2" disabled /><span><button type="button" disabled aria-label="增加"><i class="caret up"></i></button><button type="button" disabled aria-label="减少"><i class="caret"></i></button></span></div>
      </div>
      <div class="field tick"><label><input type="checkbox" checked />清理</label></div>
      <div class="field tick"><label><input type="checkbox" checked />生成刀轨</label></div>
    </section>
    <div class="actions">
      <button type="button" class="primary">确定</button>
      <button type="button">应用</button>
      <button type="button">取消</button>
    </div>
  </form>
</body>
</html>
```
FILE: styles.css
```css
* {
  box-sizing: border-box;
}
body {
  display: flex;
  flex-direction: column;
  min-height: 100vh;
  margin: 0;
  position: relative;
  background: #fff;
  color: #1c1c1c;
  font-family: "Open Sans", "Noto Sans CJK SC", sans-serif;
  font-size: 12px;
  line-height: 20px;
  overflow-x: hidden;
}
button, input, select {
  font: inherit;
  color: inherit;
}
button {
  background: none;
  border: 0;
  padding: 0;
  margin: 0;
  white-space: nowrap;
}
h1, h2, h3 {
  margin: 0;
  font-weight: normal;
}
a {
  color: inherit;
  text-decoration: none;
}
.sprite {
  position: absolute;
  width: 0;
  height: 0;
}
.ico {
  display: block;
  flex: none;
  width: 16px;
  height: 16px;
  fill: #e8e8e8;
  stroke: #b8b8b8;
}
.ico.m {
  width: 24px;
  height: 24px;
}
.ico.l {
  width: 32px;
  height: 32px;
}
.caret {
  flex: none;
  width: 6px;
  height: 3px;
  border: 3px solid transparent;
  border-top-color: #1a1a1a;
  border-bottom: 0;
}
.caret.up {
  border-top: 0;
  border-bottom: 3px solid #999;
}
.vsep {
  flex: none;
  width: 1px;
  height: 21px;
  background: #d4d4d4;
}
.tool {
  display: flex;
  flex: none;
  justify-content: center;
  align-items: center;
  width: 25px;
  height: 24px;
}
.drop {
  display: flex;
  flex: none;
  justify-content: center;
  align-items: center;
  width: 12px;
  height: 24px;
}
.letter {
  color: #8c8c8c;
  font: 20px/20px "Liberation Serif", serif;
}

/* title bar */
.titlebar {
  display: flex;
  align-items: center;
  height: 28px;
  padding-right: 6px;
}
.logo {
  width: 42px;
  padding-left: 3px;
  color: #7f98a4;
  font-size: 23px;
  font-weight: bold;
}
.titlebar .tool {
  width: 23px;
  margin: 0 3px;
}
.titlebar .tool + .tool {
  margin-left: -3px;
}
.titlebar .drop {
  margin: 0 2px 0 -3px;
}
.qat {
  display: flex;
  align-items: center;
  gap: 4px;
  margin-left: 7px;
}
.qat.off {
  color: #b8b8b8;
}
.custom {
  margin-left: 5px;
  padding-top: 2px;
  border-top: 1px solid #222;
}
.custom .caret {
  display: block;
}
.titlebar h1 {
  flex: 1;
  font-size: 14px;
  text-align: center;
}
.siemens {
  color: #009494;
  font-size: 14px;
  font-weight: bold;
}
.wincontrols {
  display: flex;
  gap: 9px;
  margin-left: 24px;
}
.wincontrols svg {
  display: block;
  width: 14px;
  height: 14px;
  fill: #fff;
  stroke: #444;
  stroke-width: 2;
}

/* ribbon tabs */
.tabs {
  display: flex;
  align-items: stretch;
  height: 29px;
  padding-right: 9px;
  background: #dcdcdc;
  font-size: 14px;
  line-height: 29px;
}
.tabs a {
  flex: none;
  padding: 0 13px;
}
.tabs .file {
  width: 85px;
  margin-right: 3px;
  padding: 0;
  background: #56a0b8;
  color: #fff;
  text-align: center;
}
.tabs .active {
  background: #fff;
  border-top: 1px solid #9c9c9c;
  color: #0b6280;
}
.search {
  display: flex;
  align-items: center;
  align-self: center;
  width: 140px;
  height: 21px;
  margin-left: auto;
  margin-right: 6px;
  border: 1px solid #a0a0a0;
  background: #fff;
}
.search input {
  flex: 1;
  min-width: 0;
  padding: 0 2px;
  border: 0;
  background: none;
  font-size: 12px;
}
.search input::placeholder {
  color: #999;
  opacity: 1;
}
.search svg {
  width: 16px;
  height: 16px;
  margin-right: 3px;
  fill: none;
  stroke: #444;
}
.tabs .tool {
  width: 26px;
  height: 28px;
}
.tutorial {
  display: flex;
  align-items: center;
  gap: 4px;
  margin-left: 5px;
  font-size: 12px;
}

/* ribbon */
.ribbon {
  display: flex;
  height: 97px;
  border-bottom: 1px solid #cfcfcf;
}
.group {
  display: flex;
  flex: none;
  flex-direction: column;
  justify-content: space-between;
  margin: 2px 0 4px;
  padding-left: 12px;
  border-right: 1px solid #d4d4d4;
}
.menu-group {
  width: 50px;
  padding-left: 0;
}
.menu-group .big {
  width: 50px;
}
.wide {
  flex: 1 1 0;
  min-width: 0;
}
.wide:nth-child(2) {
  border-right: 0;
}
.right .cols {
  justify-content: flex-end;
}
.last {
  width: 31px;
  padding: 0;
  border: 0;
  justify-content: flex-end;
}
.cols {
  display: flex;
  gap: 9px;
  height: 70px;
  padding-right: 10px;
}
.cols:has(.more) {
  padding-right: 4px;
}
.col {
  display: flex;
  flex-direction: column;
  justify-content: space-around;
}
.cmd {
  display: flex;
  align-items: center;
  gap: 4px;
  color: #b8b8b8;
}
.cmd .letter {
  color: #999;
  font-size: 18px;
  line-height: 16px;
  text-align: center;
}
.kg {
  border: 1px solid #b8b8b8;
  border-radius: 2px;
  background: #ececec;
  color: #909090;
  font-size: 10px;
  line-height: 12px;
  text-align: center;
}
.big {
  display: flex;
  flex-direction: column;
  align-items: center;
  padding-top: 2px;
}
.big.more {
  margin-left: 2px;
}
.big.off {
  color: #b8b8b8;
}
.big .caret {
  margin-top: 3px;
}
.face {
  display: flex;
  justify-content: center;
  align-items: center;
  width: 38px;
  height: 35px;
  margin-bottom: 1px;
}
.more .face {
  border: 1px solid #d4d4d4;
  border-radius: 3px;
}
.ico.menu {
  width: 32px;
  height: 28px;
}
.caption {
  display: flex;
  align-items: center;
  margin-left: -12px;
  padding-right: 8px;
  color: #0b6280;
  line-height: 12px;
}
.caption span {
  flex: 1;
  text-align: center;
}

/* selection toolbar */
.toolbar {
  display: flex;
  align-items: center;
  height: 33px;
  padding-right: 3px;
  border-bottom: 1px solid #8a8a8a;
}
.toolbar .vsep {
  height: 25px;
  margin: 0 6px;
}
.menu-m {
  width: 74px;
  margin-left: 10px;
  gap: 4px;
}
.type-filter {
  flex: none;
  width: 389px;
  height: 21px;
  margin-left: 7px;
  border: 1px solid #a0a0a0;
  background: #fff;
}
.overflow {
  margin-left: auto;
}

/* work area */
main {
  display: flex;
  flex: 1;
}
.rail {
  display: flex;
  flex: none;
  flex-direction: column;
  width: 32px;
  background: #d9d9d9;
  border-right: 1px solid #a8a8a8;
}
.rail button {
  display: flex;
  justify-content: flex-end;
  align-items: center;
  height: 42px;
  padding-right: 2px;
}
.rail svg {
  width: 23px;
  height: 23px;
}
.rail .gear {
  justify-content: center;
  height: 24px;
  color: #333;
}
.rail .gear svg {
  width: 14px;
  height: 14px;
}
.rail .first {
  margin-top: 18px;
}
.rail .spaced {
  margin-top: 12px;
}
.rail .active {
  margin: 0 -1px 0 2px;
  background: #fff;
  border: 1px solid #a8a8a8;
  border-right: 0;
}
.navigator {
  display: flex;
  flex: none;
  flex-direction: column;
  width: 270px;
  padding: 0 9px 6px 6px;
  border-right: 1px solid #888;
}
.nav-title {
  display: flex;
  justify-content: space-between;
  align-items: center;
  height: 28px;
  padding: 2px 6px 0 4px;
}
.nav-title h2 {
  font-size: 13px;
}
.maximize {
  width: 12px;
  height: 11px;
  border: 1px solid #222;
  border-top-width: 2px;
}
.tree {
  display: flex;
  flex: 1;
  flex-direction: column;
  justify-content: space-between;
  border: 1px solid #d8d8d8;
  padding: 1px;
  background: linear-gradient(#111, #111) 200px 21px / 1px calc(100% - 38px) no-repeat,
    repeating-linear-gradient(#fff 0 19px, #e9e9e9 19px 20px, #f9f9f9 20px 39px, #e9e9e9 39px 40px) 0 21px;
}
.tree table {
  width: 100%;
  table-layout: fixed;
  border-collapse: collapse;
}
.tree th {
  height: 20px;
  padding: 0 6px;
  background: #efefef;
  border-bottom: 1px solid #d4d4d4;
  font-weight: normal;
  text-align: left;
  line-height: 19px;
}
.tree th:first-child {
  width: 200px;
  border-right: 1px solid #c8c8c8;
}
.tree td {
  height: 20px;
  padding: 0 4px;
  line-height: 19px;
}
.node {
  display: flex;
  align-items: center;
  height: 19px;
  gap: 4px;
}
.node svg {
  flex: none;
  width: 15px;
  height: 15px;
}
.node .branch {
  width: 14px;
  height: 20px;
  margin-right: -3px;
  fill: none;
  stroke: #999;
  stroke-dasharray: 1 1;
}
.branch .minus {
  fill: #fff;
  stroke-dasharray: none;
}
.branch .bar {
  stroke: #111;
  stroke-dasharray: none;
}
.lv2 {
  padding-left: 20px;
  margin-right: -4px;
}
.lv2 svg {
  margin-right: -3px;
}
.current span {
  flex: 1;
  padding-left: 3px;
  background: #8bc0cf;
}
.current td:last-child {
  background: #8bc0cf;
  background-clip: padding-box;
  border-left: 1px solid #111;
}
.ok {
  display: block;
  flex: none;
  width: 14px;
  height: 14px;
}
.hscroll {
  display: flex;
  align-items: center;
  height: 16px;
  padding: 0 5px;
  background: #efefef;
}
.hscroll .left, .hscroll .right {
  border: 4px solid transparent;
  border-left: 0;
  border-right-color: #333;
}
.hscroll .right {
  margin-left: auto;
  border-left: 4px solid #333;
  border-right: 0;
}
.thumb {
  width: 47px;
  height: 15px;
  margin-left: 9px;
  border: 1px solid #989898;
  border-radius: 2px;
  background: repeating-linear-gradient(90deg, #444 0 1px, transparent 1px 3px) center / 7px 7px no-repeat,
    linear-gradient(#f6f6f6, #d8d8d8);
}
.splitter {
  height: 5px;
  margin-bottom: 1px;
  border: 1px solid #a8a8a8;
  background: #d8d8d8;
}
.fold {
  display: flex;
  justify-content: space-between;
  align-items: center;
  height: 25px;
  padding: 0 6px 0 7px;
  border-bottom: 2px solid #d4d4d4;
  color: #0b6280;
  font-size: 15px;
}
.fold svg, .dialog h3 svg {
  width: 12px;
  height: 10px;
  fill: none;
  stroke: #0b6280;
  stroke-width: 2;
}
.viewport {
  display: flex;
  flex: 1;
  flex-direction: column;
  min-width: 0;
  border-right: 1px solid #d4d4d4;
}
.view-tabs {
  height: 25px;
  padding: 3px 4px;
  border-bottom: 2px solid #56a0b8;
}
.scene {
  flex: 1;
  width: 100%;
  min-height: 0;
}
.stock {
  fill: #fae5d0;
  stroke: #dd7c22;
  stroke-width: 2;
}
.wall {
  fill: #bdb7ad;
  stroke: #4a4036;
}
.face {
  stroke: #4a4036;
}
.scene .face {
  fill: #d6d5cf;
}
.pocket {
  fill: #fae5d0;
  stroke: #5a5046;
}
.edge {
  fill: none;
  stroke: #4a3a2e;
}
.soft {
  stroke: #77736c;
}
.rim {
  fill: none;
  stroke: #6c7274;
}
.ax {
  stroke-width: 2;
}
.ax.y {
  stroke: #2fa038;
}
.ax.x {
  stroke: #d03038;
}
.axis {
  font: 14px "Liberation Sans", sans-serif;
}
.axis.small {
  font-size: 9px;
}
.axis.x {
  fill: #d03038;
}
.axis.y {
  fill: #3a8a3a;
}
.axis.z {
  fill: #2040d0;
}
.note {
  fill: #2a20c8;
  font: 200 27px "Noto Sans CJK SC", sans-serif;
}
.path {
  fill: #f09a50;
  font: bold 26px "Noto Sans CJK SC", sans-serif;
}
.cuts {
  fill: none;
  stroke: #f01818;
  stroke-width: 3;
}
.cuts.pts {
  stroke: #1818e8;
  stroke-linecap: square;
}
.status {
  display: flex;
  justify-content: flex-end;
  align-items: center;
  height: 24px;
  padding-right: 55px;
  border-top: 1px solid #a0a0a0;
  border-bottom: 2px solid #1f4258;
}

/* planar text dialog */
.dialog {
  position: absolute;
  top: 42px;
  left: 320px;
  width: 346px;
  padding: 0 6px;
  background: #efefef;
  border: solid #d6d6d6;
  border-width: 0 1px 1px;
  font-size: 13px;
}
.dlg-title {
  display: flex;
  align-items: center;
  gap: 8px;
  height: 25px;
  margin: 0 -7px 4px;
  padding: 0 8px;
  background: #56a0b8;
  color: #fff;
}
.dlg-title h2 {
  flex: 1;
  font-size: 15px;
}
.dlg-title svg {
  display: block;
  width: 14px;
  height: 14px;
}
.dlg-title button svg {
  fill: none;
  stroke: #fff;
  stroke-width: 2;
}
.dialog section {
  margin-bottom: 4px;
  padding: 1px 8px 5px;
  background: #fff;
  border-bottom: 1px solid #c8c8c8;
}
.dialog h3 {
  display: flex;
  justify-content: space-between;
  align-items: center;
  height: 21px;
  margin: 0 -3px 9px -2px;
  color: #0b6280;
  font-size: 15px;
}
.clean {
  width: 100%;
  height: 31px;
  margin-bottom: 2px;
  border: 1px solid #a0a0a0;
}
.pick {
  display: flex;
  align-items: center;
  gap: 2px;
  height: 32px;
  margin-bottom: 2px;
}
.step {
  display: flex;
  flex: 1;
  align-items: center;
  gap: 5px;
  height: 32px;
  padding-left: 1px;
}
.hot {
  background: #ffe177;
}
.sq {
  display: flex;
  justify-content: center;
  align-items: center;
  width: 32px;
  height: 32px;
}
.sq svg {
  width: 24px;
  height: 24px;
}
.letterA {
  color: #1010c8;
  font: bold 26px "Liberation Serif", serif;
}
.framed {
  width: 24px;
  height: 24px;
  border: 1px solid #a0a0a0;
}
.framed svg {
  display: block;
  width: 18px;
  height: 18px;
  margin: 2px;
}
.arrow {
  display: flex;
  justify-content: center;
  align-items: center;
  width: 17px;
  height: 32px;
  margin-left: -1px;
}
.dialog label {
  display: flex;
  align-items: center;
}
.pick label {
  width: 72px;
  padding-bottom: 4px;
}
.dialog input[type="checkbox"] {
  appearance: none;
  width: 13px;
  height: 13px;
  margin: 0 5px 0 0;
  border: 1px solid #8a8a8a;
  background: linear-gradient(135deg, #d4d8dc, #fafafa);
}
.dialog input[type="checkbox"]:checked::before {
  content: "";
  display: block;
  width: 4px;
  height: 8px;
  margin: 0 0 0 4px;
  border: solid #3c4c94;
  border-width: 0 2px 2px 0;
  transform: rotate(40deg);
}
.field {
  display: flex;
  align-items: center;
  height: 25px;
  margin-bottom: 2px;
}
.field label:first-child {
  flex: 1;
}
.field input[type="text"] {
  width: 90px;
  height: 25px;
  padding: 3px 4px;
  border: 1px solid #a0a0a0;
  background: #fff;
  color: #333;
  font: 17px "Liberation Mono", monospace;
  text-align: right;
}
.field input.selected {
  background: #3399ff content-box;
  color: #fff;
}
.field .off {
  margin-right: 5px;
  color: #a8a8a8;
}
.spin {
  display: flex;
}
.field .spin input {
  width: 72px;
  padding-right: 7px;
  border-color: #d4d4d4;
  border-right: 0;
  color: #888;
}
.spin span {
  display: flex;
  flex-direction: column;
  width: 18px;
}
.spin button {
  display: flex;
  flex: 1;
  justify-content: center;
  align-items: center;
  border: 1px solid #b4b4b4;
}
.spin .caret {
  border-top-color: #999;
}
.field.tick {
  margin: 0;
}
.actions {
  display: flex;
  justify-content: flex-end;
  gap: 5px;
  padding: 8px 9px 10px 0;
}
.actions button {
  width: 56px;
  height: 27px;
  border: 1px solid #a8a8a8;
  background: #dedede;
}
.actions .primary {
  border-color: #72b4c6;
  background: #72b4c6;
  color: #fff;
}
```
